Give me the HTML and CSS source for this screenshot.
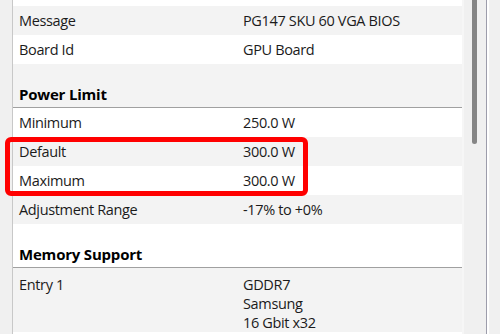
FILE: index.html
```html
<!DOCTYPE html>
<html lang="en">
<head>
  <meta charset="UTF-8">
  <title>BIOS Details</title>
  <link rel="stylesheet" href="styles.css">
</head>
<body>
  <div class="window">
    <!-- left frame strip -->
    <div class="side"></div>

    <!-- details table -->
    <div class="details">
      <div class="row row-top"></div>
      <div class="row alt"><span class="label">Message</span><span class="value">PG147 SKU 60 VGA BIOS</span></div>
      <div class="row"><span class="label">Board Id</span><span class="value">GPU Board</span></div>

      <div class="section alt">Power Limit</div>
      <div class="row"><span class="label">Minimum</span><span class="value">250.0 W</span></div>
      <div class="row alt"><span class="label">Default</span><span class="value">300.0 W</span></div>
      <div class="row"><span class="label">Maximum</span><span class="value">300.0 W</span></div>
      <div class="row alt"><span class="label">Adjustment Range</span><span class="value">-17% to +0%</span></div>

      <div class="section">Memory Support</div>
      <div class="row row-multi alt">
        <span class="label">Entry 1</span>
        <span class="value">GDDR7<br>Samsung<br>16 Gbit x32</span>
      </div>

      <!-- highlight drawn over the Default / Maximum rows -->
      <div class="highlight"></div>
    </div>

    <!-- scrollbar and outer frame -->
    <div class="scrollbar">
      <div class="thumb"></div>
    </div>
    <div class="frame-edge"></div>
  </div>
</body>
</html>
```

FILE: styles.css
```css
/* Page */
body {
  margin: 0;
  font-family: "Open Sans", "Noto Sans", Arial, sans-serif;
  font-size: 14.5px;
  letter-spacing: -0.35px;
  color: #1b1b1b;
  background: #f0f0f0;
}

.window {
  display: flex;
  height: 334px;
  overflow: hidden;
}

/* Left frame strip */
.side {
  width: 12px;
  background: #f0f0f0;
  border-right: 1px solid #c8c8c8;
}

/* Details table */
.details {
  position: relative;
  width: 449px;
  background: #ffffff;
}

.row {
  display: grid;
  grid-template-columns: 230px 1fr;
  align-items: center;
  height: 29px;
  line-height: 19px;
  background: #ffffff;
}

.row.alt,
.section.alt {
  background: #f3f3f3;
}

.row-top {
  height: 6px;
}

.row-multi {
  align-items: start;
  height: auto;
  padding-top: 7px;
}

.label {
  padding-left: 6px;
}

.section {
  display: flex;
  align-items: flex-end;
  height: 44px;
  padding-left: 6px;
  padding-bottom: 3px;
  box-sizing: border-box;
  font-weight: bold;
  font-size: 15px;
  letter-spacing: -0.2px;
  line-height: 19px;
  color: #000;
  background: #ffffff;
  border-bottom: 1px solid #a0a0a0;
}

/* Red annotation box */
.highlight {
  position: absolute;
  left: -8px;
  top: 137px;
  width: 293px;
  height: 49px;
  border: 5px solid #ff0000;
  border-radius: 6px;
}

/* Scrollbar */
.scrollbar {
  width: 22px;
  background: #f0f0f0;
  border-left: 2px solid #f6f6f6;
}

.thumb {
  width: 5px;
  height: 154px;
  margin-top: -10px;
  margin-left: 8px;
  background: #858585;
  border-radius: 3px;
}

.frame-edge {
  flex: 1;
  background: #f0f0f0;
  border-left: 1px solid #9d9dab;
  box-shadow: inset 2px 0 0 #ffffff;
}
```
